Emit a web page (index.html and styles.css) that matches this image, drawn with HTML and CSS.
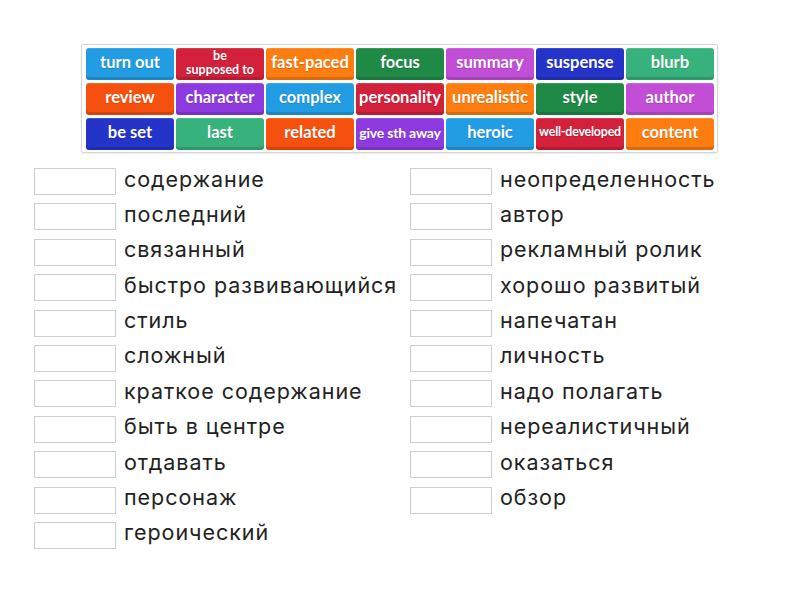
FILE: index.html
```html
<!DOCTYPE html>
<html>
<head>
<meta charset="utf-8">
<link rel="stylesheet" href="styles.css">
</head>
<body>
<div class="page">
  <div class="bank">
    <div class="tile c1">turn out</div>
    <div class="tile c2 two"><p>be<br>supposed to</p></div>
    <div class="tile c3">fast-paced</div>
    <div class="tile c4">focus</div>
    <div class="tile c5">summary</div>
    <div class="tile c6">suspense</div>
    <div class="tile c7">blurb</div>
    <div class="tile c8">review</div>
    <div class="tile c9">character</div>
    <div class="tile c1">complex</div>
    <div class="tile c2">personality</div>
    <div class="tile c3">unrealistic</div>
    <div class="tile c4">style</div>
    <div class="tile c5">author</div>
    <div class="tile c6">be set</div>
    <div class="tile c7">last</div>
    <div class="tile c8">related</div>
    <div class="tile c9 mid">give sth away</div>
    <div class="tile c1">heroic</div>
    <div class="tile c2 small">well-developed</div>
    <div class="tile c3">content</div>
  </div>
  <div class="lists">
    <ul class="col">
      <li><span class="box"></span><span class="word">содержание</span></li>
      <li><span class="box"></span><span class="word">последний</span></li>
      <li><span class="box"></span><span class="word">связанный</span></li>
      <li><span class="box"></span><span class="word">быстро развивающийся</span></li>
      <li><span class="box"></span><span class="word">стиль</span></li>
      <li><span class="box"></span><span class="word">сложный</span></li>
      <li><span class="box"></span><span class="word">краткое содержание</span></li>
      <li><span class="box"></span><span class="word">быть в центре</span></li>
      <li><span class="box"></span><span class="word">отдавать</span></li>
      <li><span class="box"></span><span class="word">персонаж</span></li>
      <li><span class="box"></span><span class="word">героический</span></li>
    </ul>
    <ul class="col">
      <li><span class="box"></span><span class="word">неопределенность</span></li>
      <li><span class="box"></span><span class="word">автор</span></li>
      <li><span class="box"></span><span class="word">рекламный ролик</span></li>
      <li><span class="box"></span><span class="word">хорошо развитый</span></li>
      <li><span class="box"></span><span class="word">напечатан</span></li>
      <li><span class="box"></span><span class="word">личность</span></li>
      <li><span class="box"></span><span class="word">надо полагать</span></li>
      <li><span class="box"></span><span class="word">нереалистичный</span></li>
      <li><span class="box"></span><span class="word">оказаться</span></li>
      <li><span class="box"></span><span class="word">обзор</span></li>
    </ul>
  </div>
</div>
</body>
</html>
```
FILE: styles.css
```css
html, body {
  margin: 0;
  padding: 0;
  background: #fff;
}
.page {
  padding: 44px 0 0 81px;
}
.bank {
  display: inline-grid;
  grid-template-columns: repeat(7, 88px);
  grid-auto-rows: 32px;
  column-gap: 2px;
  row-gap: 3px;
  padding: 3px 3px 2px 4px;
  border: 1px solid #d6d6d6;
  border-radius: 2px;
  box-shadow: 0 1px 2px rgba(0,0,0,0.08);
}
.tile {
  display: flex;
  flex-direction: column;
  align-items: center;
  justify-content: center;
  border-radius: 3px;
  color: #fff;
  font-family: Lato, "Open Sans", sans-serif;
  font-weight: 700;
  font-size: 16.5px;
  line-height: 1;
  padding-bottom: 3px;
  box-sizing: border-box;
  box-shadow: inset 0 -3px 0 rgba(0,0,0,0.14), inset 0 1px 0 rgba(255,255,255,0.12);
  text-shadow: 0 1px 1px rgba(0,0,0,0.15);
  white-space: nowrap;
  overflow: hidden;
}
.tile.two p {
  margin: 0;
  font-size: 12.5px;
  line-height: 14.5px;
  text-align: center;
}
.tile.two { padding-bottom: 2px; }
.tile.mid { font-size: 14px; letter-spacing: -0.2px; }
.tile.small { font-size: 12.4px; letter-spacing: -0.2px; }
.c1 { background: #229ce2; }
.c2 { background: #d3213b; }
.c3 { background: #fe7d10; }
.c4 { background: #1f8a46; }
.c5 { background: #c24dd6; }
.c6 { background: #2534c8; }
.c7 { background: #37b27d; }
.c8 { background: #f5500e; }
.c9 { background: #8d3be0; }

.lists {
  display: flex;
  margin: 15px 0 0 -47px;
}
.col {
  list-style: none;
  margin: 0;
  padding: 0;
  display: flex;
  flex-direction: column;
  row-gap: 8.4px;
}
.col:first-child { width: 376px; }
.col li {
  display: flex;
  align-items: center;
  height: 27px;
}
.box {
  width: 80px;
  height: 25px;
  border: 1px solid #cfcfcf;
  flex: none;
}
.word {
  margin-left: 8px;
  font-family: Inter, "Noto Sans", sans-serif;
  font-size: 21.5px;
  letter-spacing: 0.95px;
  color: #222;
  white-space: nowrap;
  position: relative;
  top: -3px;
}
```
